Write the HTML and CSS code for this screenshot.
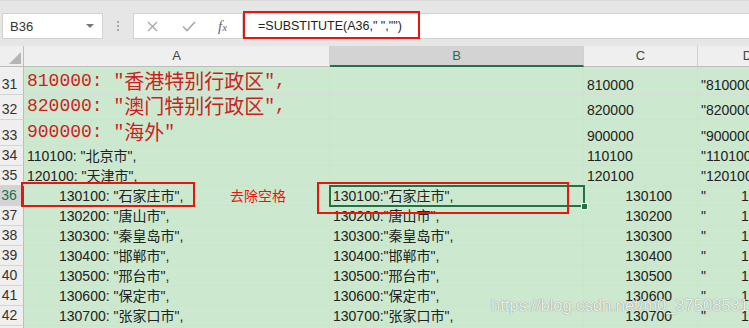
FILE: index.html
```html
<!DOCTYPE html>
<html lang="zh-CN">
<head>
  <meta charset="UTF-8" />
  <title>Sheet - SUBSTITUTE</title>
  <link rel="stylesheet" href="styles.css">
</head>
<body>
  <div class="toolbar">
    <div class="name-box">B36<span class="caret"></span></div>
    <div class="grip"><span></span></div>
    <div class="fx-buttons">
      <svg class="btn-x" width="11" height="11" viewBox="0 0 11 11"><path d="M1 1 L10 10 M10 1 L1 10" stroke="#a9a9a9" stroke-width="1.4" fill="none"/></svg>
      <svg class="btn-ok" width="14" height="11" viewBox="0 0 14 11"><path d="M1 5.5 L5 9.5 L13 1" stroke="#a9a9a9" stroke-width="1.6" fill="none"/></svg>
      <span class="fx">f<i>x</i></span>
    </div>
    <div class="formula">
      <span class="formula-text">=SUBSTITUTE(A36," ","")</span>
      <div class="formula-mark"></div>
    </div>
  </div>

  <div class="sheet">
    <div class="row head">
      <div class="corner"><span></span></div>
      <div>A</div>
      <div class="sel">B</div>
      <div>C</div>
      <div>D</div>
    </div>

    <div class="row r31">
      <div class="rh">31</div>
      <div class="big">810000: "<span class="cjk">香港特别行政区</span>",</div>
      <div></div>
      <div>810000</div>
      <div>"810000"</div>
    </div>
    <div class="row r32">
      <div class="rh">32</div>
      <div class="big">820000: "<span class="cjk">澳门特别行政区</span>",</div>
      <div></div>
      <div>820000</div>
      <div>"820000"</div>
    </div>
    <div class="row r33">
      <div class="rh">33</div>
      <div class="big">900000: "<span class="cjk">海外</span>"</div>
      <div></div>
      <div>900000</div>
      <div>"900000"</div>
    </div>
    <div class="row">
      <div class="rh">34</div>
      <div>110100: "北京市",</div>
      <div></div>
      <div>110100</div>
      <div>"110100"</div>
    </div>
    <div class="row">
      <div class="rh">35</div>
      <div>120100: "天津市",</div>
      <div></div>
      <div>120100</div>
      <div>"120100"</div>
    </div>
    <div class="row">
      <div class="rh sel">36</div>
      <div class="ind">130100: "石家庄市",</div>
      <div class="active">130100:"石家庄市",<span class="handle"></span></div>
      <div class="num">130100</div>
      <div>"         130100</div>
    </div>
    <div class="row">
      <div class="rh">37</div>
      <div class="ind">130200: "唐山市",</div>
      <div>130200:"唐山市",</div>
      <div class="num">130200</div>
      <div>"         130200</div>
    </div>
    <div class="row">
      <div class="rh">38</div>
      <div class="ind">130300: "秦皇岛市",</div>
      <div>130300:"秦皇岛市",</div>
      <div class="num">130300</div>
      <div>"         130300</div>
    </div>
    <div class="row">
      <div class="rh">39</div>
      <div class="ind">130400: "邯郸市",</div>
      <div>130400:"邯郸市",</div>
      <div class="num">130400</div>
      <div>"         130400</div>
    </div>
    <div class="row">
      <div class="rh">40</div>
      <div class="ind">130500: "邢台市",</div>
      <div>130500:"邢台市",</div>
      <div class="num">130500</div>
      <div>"         130500</div>
    </div>
    <div class="row">
      <div class="rh">41</div>
      <div class="ind">130600: "保定市",</div>
      <div>130600:"保定市",</div>
      <div class="num">130600</div>
      <div>"         130600</div>
    </div>
    <div class="row">
      <div class="rh">42</div>
      <div class="ind">130700: "张家口市",</div>
      <div>130700:"张家口市",</div>
      <div class="num">130700</div>
      <div>"         130700</div>
    </div>
    <div class="row">
      <div class="rh">43</div>
      <div></div>
      <div></div>
      <div></div>
      <div></div>
    </div>

    <!-- annotations drawn over the sheet -->
    <div class="mark mark-a"></div>
    <div class="mark mark-b"></div>
    <div class="note">去除空格</div>
    <div class="watermark">https://blog.csdn.net/m0_37508531</div>
  </div>
</body>
</html>
```

FILE: styles.css
```css
* {
  box-sizing: border-box;
}

html, body {
  margin: 0;
  padding: 0;
}

body {
  width: 749px;
  height: 328px;
  overflow: hidden;
  background-color: #e6e6e6;
  font-family: "Liberation Sans", "Noto Sans CJK SC", sans-serif;
  color: #222;
}

/* formula bar */
.toolbar {
  display: flex;
  align-items: flex-start;
  height: 46px;
  padding-top: 12px;
  border-top: 1px solid #d9d9d9;
  background-color: #e6e6e6;
}

.name-box {
  display: flex;
  align-items: center;
  justify-content: space-between;
  width: 101px;
  height: 26px;
  margin-left: 2px;
  padding: 0 8px 0 7px;
  background: #fff;
  border: 1px solid #d2d2d2;
  font-size: 13px;
  color: #333;
}

.caret {
  width: 0;
  height: 0;
  border-left: 4px solid transparent;
  border-right: 4px solid transparent;
  border-top: 4px solid #777;
}

.grip {
  display: flex;
  justify-content: center;
  align-items: center;
  width: 30px;
  height: 26px;
}

.grip span {
  width: 2px;
  height: 10px;
  background: repeating-linear-gradient(#a9a9a9 0 2px, transparent 2px 4px);
}

.fx-buttons {
  display: flex;
  align-items: center;
  width: 110px;
  height: 26px;
  padding-left: 13px;
  background: #fff;
  border: 1px solid #d2d2d2;
}

.btn-x {
  margin-right: 24px;
}

.btn-ok {
  margin-right: 22px;
}

.fx {
  font-family: "Liberation Serif", serif;
  font-style: italic;
  font-size: 15px;
  color: #666;
}

.fx i {
  font-size: 11px;
}

.formula {
  position: relative;
  flex: 1;
  height: 26px;
  padding-left: 15px;
  background: #fff;
  border-top: 1px solid #d2d2d2;
  border-bottom: 1px solid #d2d2d2;
  font-size: 12.5px;
  line-height: 24px;
  color: #222;
  white-space: nowrap;
}

.formula-text {
  white-space: pre;
}

.formula-mark {
  position: absolute;
  left: 0;
  top: -3px;
  width: 177px;
  height: 28px;
  border: 2px solid #e8140f;
}

/* sheet grid */
.sheet {
  position: relative;
  background-color: #cce8cf;
}

.row {
  display: grid;
  grid-template-columns: 24px 306px 254px 114px 100px;
  height: 20px;
}

.r31 { height: 28px; }
.r32 { height: 25px; }
.r33 { height: 26px; }

.row > div {
  display: flex;
  align-items: flex-end;
  padding: 0 3px 1px;
  border-right: 1px solid #d6dcd6;
  border-bottom: 1px solid #d6dcd6;
  font-size: 14px;
  line-height: 16px;
  white-space: pre;
}

.head {
  height: 21px;
}

.head > div {
  align-items: center;
  justify-content: center;
  padding: 0;
  background-color: #efefef;
  border-right-color: #d0d0d0;
  border-bottom-color: #bdbdbd;
  font-size: 13px;
  color: #444;
}

.head > div.sel {
  background-color: #d3d3d3;
  color: #217346;
  border-bottom: 2px solid #217346;
}

.head > div.corner {
  justify-content: flex-end;
  align-items: flex-end;
  padding: 0 2px 2px 0;
  border-right-color: #bdbdbd;
}

.corner span {
  width: 0;
  height: 0;
  border-left: 12px solid transparent;
  border-bottom: 12px solid #b5b5b5;
}

.row > .rh {
  justify-content: center;
  padding: 0 4px 2px 0;
  background-color: #efefef;
  border-right-color: #bdbdbd;
  border-bottom-color: #d4d4d4;
  font-size: 14px;
  color: #333;
}

.row > .rh.sel {
  background-color: #d3d3d3;
  color: #217346;
  border-right: 2px solid #217346;
}

.row > .big {
  padding-bottom: 2px;
  font-family: "Liberation Mono", "Noto Sans CJK SC", monospace;
  font-size: 18px;
  line-height: 22px;
  color: #cc1f1f;
}

.big .cjk {
  font-family: "Noto Sans CJK SC", sans-serif;
  font-size: 20px;
}

.row > .ind {
  padding-left: 35px;
}

.row > .num {
  justify-content: flex-end;
  padding-right: 25px;
}

.row > .active {
  position: relative;
  z-index: 1;
  outline: 2px solid #217346;
  outline-offset: -1px;
}

.handle {
  position: absolute;
  right: -5px;
  bottom: -5px;
  width: 7px;
  height: 7px;
  background: #217346;
  border: 1px solid #fff;
}

/* red annotations */
.mark {
  position: absolute;
  z-index: 2;
  border: 2px solid #e8140f;
}

.mark-a {
  left: 21px;
  top: 136px;
  width: 174px;
  height: 25px;
}

.mark-b {
  left: 317px;
  top: 136px;
  width: 252px;
  height: 32px;
}

.note {
  position: absolute;
  left: 230px;
  top: 139px;
  font-family: "Noto Sans CJK SC", sans-serif;
  font-size: 14px;
  line-height: 20px;
  color: #f01010;
}

.watermark {
  position: absolute;
  z-index: 3;
  left: 491px;
  top: 250px;
  font-size: 16.5px;
  line-height: 19px;
  color: rgba(255, 255, 255, 0.9);
  text-shadow: 0 0 1px rgba(0, 0, 0, 0.55);
}
```
